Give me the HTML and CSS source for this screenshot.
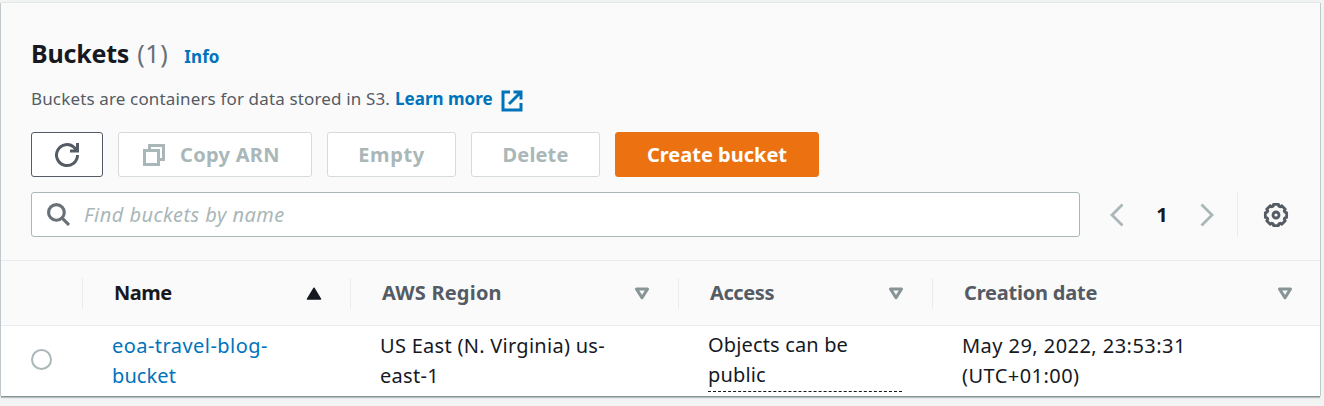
FILE: index.html
```html
<!DOCTYPE html>
<html lang="en">
<head>
<meta charset="utf-8">
<title>Buckets</title>
<link rel="stylesheet" href="styles.css">
</head>
<body>
<main class="panel">
  <header class="panel-header">
    <div class="title-row">
      <h1 class="title"><span class="title-name">Buckets</span> <span class="count">(1)</span></h1>
      <a class="info">Info</a>
    </div>
    <p class="description"><span class="desc-text">Buckets are containers for data stored in S3.</span>
      <a class="learn">Learn more</a>
      <svg class="external" viewBox="0 0 22 22"><path d="M9 2H2v18h18v-7M12.500 2H20v7.500M19.500 2.500L8 14"/></svg>
    </p>
    <div class="actions">
      <button class="btn btn-refresh" aria-label="Refresh"><svg class="icon-refresh" viewBox="0 0 26 26"><path d="M23.500 13a10.500 10.500 0 1 1-3.200-7.500L23 8.800M23.500 1v7.900H16"/></svg></button>
      <button class="btn btn-copy" disabled><svg class="icon-copy" viewBox="0 0 22 22"><path d="M1.500 6.500h14v14h-14zM6.500 6V1.500h14V15.500H16"/></svg><span class="t-copy">Copy ARN</span></button>
      <button class="btn btn-empty" disabled><span class="t-empty">Empty</span></button>
      <button class="btn btn-delete" disabled><span class="t-delete">Delete</span></button>
      <button class="btn btn-create"><span class="t-create">Create bucket</span></button>
    </div>
    <div class="tools">
      <div class="search">
        <svg class="icon-search" viewBox="0 0 22 22"><circle cx="9" cy="9" r="7.500"/><path d="M14.500 14.500l6.500 6.500"/></svg>
        <span class="placeholder">Find buckets by name</span>
      </div>
      <nav class="pager">
        <svg class="chevron" viewBox="0 0 14 24"><path d="M12.500 1.500L2 12l10.500 10.500"/></svg>
        <span class="page">1</span>
        <svg class="chevron" viewBox="0 0 14 24"><path d="M1.500 1.500L12 12 1.500 22.500"/></svg>
      </nav>
      <div class="settings">
        <svg class="icon-gear" viewBox="-12.500 -12.500 25 25"><path d="M10.230 -2.360V2.360L8.500 2.700 7.900 4.100 8.900 5.560 5.560 8.900 4.100 7.900 2.700 8.500 2.360 10.230H-2.360L-2.700 8.500 -4.100 7.900 -5.560 8.900 -8.900 5.560 -7.900 4.100 -8.500 2.700 -10.230 2.360V-2.360L-8.500 -2.700 -7.900 -4.100 -8.900 -5.560 -5.560 -8.900 -4.100 -7.900 -2.700 -8.500 -2.360 -10.230H2.360L2.700 -8.500 4.100 -7.900 5.560 -8.900 8.900 -5.560 7.900 -4.100 8.500 -2.700z"/><circle r="2.900"/></svg>
      </div>
    </div>
  </header>
  <div class="row head">
    <div class="cell"></div>
    <div class="cell sorted"><span class="h-name">Name</span><svg class="sort" viewBox="0 0 16 13"><path class="solid" d="M8 1.200L14.600 12H1.400z"/></svg></div>
    <div class="cell"><span class="h-region">AWS Region</span><svg class="sort" viewBox="0 0 16 13"><path d="M2.500 2h11L8 10.800z"/></svg></div>
    <div class="cell"><span class="h-access">Access</span><svg class="sort" viewBox="0 0 16 13"><path d="M2.500 2h11L8 10.800z"/></svg></div>
    <div class="cell"><span class="h-date">Creation date</span><svg class="sort" viewBox="0 0 16 13"><path d="M2.500 2h11L8 10.800z"/></svg></div>
  </div>
  <div class="row data">
    <div class="pick"><span class="radio"></span></div>
    <div class="value link"><span class="v-name">eoa-travel-blog-<br><span class="v-tail">bucket</span></span></div>
    <div class="value"><span class="v-region">US East (N. Virginia) us-<br>east-1</span></div>
    <div class="value"><div class="v-access">Objects can be<br>public</div></div>
    <div class="value"><span class="v-date">May 29, 2022, 23:53:31<br>(UTC+01:00)</span></div>
  </div>
</main>
</body>
</html>
```
FILE: styles.css
```css
* { box-sizing: border-box; }
body {
  margin: 0;
  height: 406px;
  overflow: hidden;
  padding: 3px 4px 0 1px;
  background: #f2f3f3;
  color: #16191f;
  font: 20px/30px "Noto Sans", "Open Sans", sans-serif;
}
svg { display: block; flex: none; fill: none; stroke: currentColor; }
.panel {
  height: 393px;
  background: #fff;
  box-shadow: 0 1px 0 #879596, 0 2px 1px #b5bfc1, 1px 0 0 #c3cbcd, -1px 0 0 #c3cbcd, 0 -1px 1px #e5e8e8;
}
.panel-header {
  height: 258px;
  padding: 32px 31px 0 30px;
  background: #fafafa;
  border-bottom: 1px solid #eaeded;
}
.title-row { display: flex; align-items: baseline; height: 36px; }
.title { display: flex; gap: 8px; margin: 0 16px 0 0; font-size: 25px; line-height: 36px; font-weight: 700; }
.title-name { letter-spacing: -0.2px; }
.count { color: #687078; font-weight: 400; letter-spacing: 0.6px; }
.info, .learn { color: #0073bb; font-weight: 700; font-size: 17px; }
.info { letter-spacing: 0.1px; }
.description { display: flex; align-items: center; height: 30px; margin: 13px 0 18px; font-size: 17px; color: #545b64; }
.desc-text { letter-spacing: 0.15px; }
.learn { margin: 0 8px 0 5px; }
.external { width: 22px; height: 22px; margin-top: 4px; color: #0073bb; stroke-width: 3; }
.actions { display: flex; gap: 15px; height: 45px; }
.btn {
  display: flex; align-items: center; justify-content: center;
  height: 45px; padding: 0;
  border: 1px solid #d5dbdb; border-radius: 3px;
  background: #fff; color: #aab7b8;
  font: 700 20px/30px "Noto Sans", "Open Sans", sans-serif;
}
.btn-refresh { width: 72px; border-color: #545b64; color: #545b64; }
.icon-refresh { width: 26px; height: 26px; stroke-width: 3; }
.btn-copy { width: 194px; gap: 15px; justify-content: flex-start; padding-left: 24px; letter-spacing: 0.3px; }
.icon-copy { width: 22px; height: 22px; stroke-width: 3; }
.btn-empty, .btn-delete { width: 129px; }
.btn-empty { letter-spacing: 0.6px; }
.btn-delete { letter-spacing: 0.15px; }
.btn-create { width: 204px; background: #ec7211; border-color: #ec7211; color: #fff; }
.tools { display: flex; align-items: center; height: 45px; margin-top: 15px; }
.search {
  display: flex; align-items: center; gap: 14px;
  width: 1049px; height: 45px; padding-left: 15px;
  border: 1px solid #aab7b8; border-radius: 3px; background: #fff;
}
.icon-search { width: 23px; height: 23px; color: #687078; stroke-width: 3; }
.placeholder { color: #aab7b8; font-style: italic; letter-spacing: 0.47px; }
.pager { display: flex; align-items: center; justify-content: space-between; width: 104px; margin-left: 30px; }
.chevron { width: 14px; height: 24px; color: #aab7b8; stroke-width: 2.8; }
.page { font-weight: 700; }
.settings { display: flex; align-items: center; height: 45px; margin-left: 23px; padding-left: 25px; border-left: 1px solid #eaeded; }
.icon-gear { width: 26px; height: 26px; color: #545b64; stroke-width: 2.7; stroke-linejoin: round; }
.row { display: grid; grid-template-columns: 81px 268px 328px 254px 1fr; }
.head { height: 65px; align-items: center; background: #fafafa; border-bottom: 1px solid #eaeded; color: #545b64; font-weight: 700; }
.cell { display: flex; align-items: center; justify-content: space-between; height: 31px; padding: 0 28px 0 31px; border-left: 1px solid #eaeded; }
.cell:first-child { border-left: 0; }
.cell:last-child { padding-right: 27px; }
.sorted { color: #16191f; }
.h-name { letter-spacing: -0.5px; }
.h-region { letter-spacing: 0.2px; }
.h-access { letter-spacing: -0.4px; }
.h-date { letter-spacing: -0.2px; }
.sort { width: 16px; height: 13px; color: #879596; stroke-width: 3.1; stroke-linejoin: round; }
.sorted .sort { color: #16191f; stroke-width: 1.4; }
.solid { fill: currentColor; }
.data { height: 70px; }
.pick { padding: 23px 0 0 30px; }
.radio { display: block; width: 21px; height: 21px; border: 2px solid #aab7b8; border-radius: 50%; }
.value { padding: 5px 30px 0; white-space: nowrap; }
.link { color: #0073bb; }
.v-name { letter-spacing: 0.45px; }
.v-tail { letter-spacing: 0.1px; }
.v-region { letter-spacing: 0.28px; }
.v-access { height: 62px; margin-top: -1px; border-bottom: 1px dashed #16191f; letter-spacing: 0.15px; }
.v-date { letter-spacing: 0.45px; }
```
